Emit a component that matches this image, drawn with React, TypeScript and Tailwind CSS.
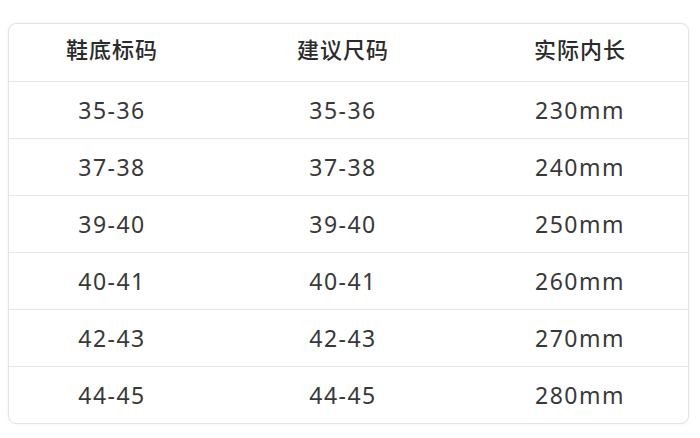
const rows = [
  ["35-36", "35-36", "230mm"],
  ["37-38", "37-38", "240mm"],
  ["39-40", "39-40", "250mm"],
  ["40-41", "40-41", "260mm"],
  ["42-43", "42-43", "270mm"],
  ["44-45", "44-45", "280mm"],
];

const cols = "grid grid-cols-[206px_256px_218px]";

export default function App() {
  return (
    <div
      className="w-[700px] h-[438px] bg-white pt-[23px] pl-[8px]"
      style={{ fontFamily: '"Noto Sans", "Noto Sans CJK SC", sans-serif' }}
    >
      <div className="w-[681px] h-[401px] rounded-lg border border-[#e3e3e3] shadow-[0_0_3px_rgba(0,0,0,0.06)] overflow-hidden">
        <div className={`${cols} h-[58px] items-center border-b border-[#e6e6e6] text-[22px] font-medium text-[#2b2b2b] tracking-[1px] pb-[8px]`}>
          <div className="text-center" style={{ fontFamily: '"Noto Sans CJK SC", sans-serif' }}>鞋底标码</div>
          <div className="text-center" style={{ fontFamily: '"Noto Sans CJK SC", sans-serif' }}>建议尺码</div>
          <div className="text-center" style={{ fontFamily: '"Noto Sans CJK SC", sans-serif' }}>实际内长</div>
        </div>
        {rows.map((r, i) => (
          <div
            key={i}
            className={`${cols} h-[57px] items-center text-[23px] text-[#383838] tracking-[1.5px] ${i < rows.length - 1 ? "border-b border-[#e6e6e6]" : ""}`}
          >
            {r.map((c, j) => (
              <div key={j} className="text-center">
                {c}
              </div>
            ))}
          </div>
        ))}
      </div>
    </div>
  );
}
